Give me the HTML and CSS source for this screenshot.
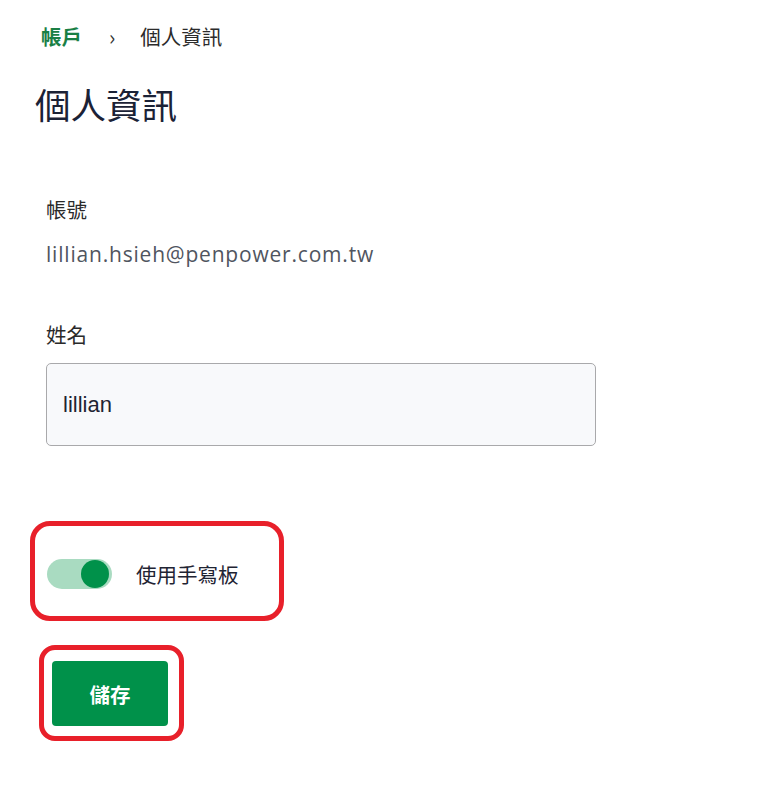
FILE: index.html
```html
<!DOCTYPE html>
<html lang="zh-Hant">
<head>
<meta charset="utf-8">
<link rel="stylesheet" href="styles.css">
</head>
<body>
<div class="page">
  <nav class="crumbs">
    <span class="crumb-link">帳戶</span>
    <span class="crumb-sep">›</span>
    <span class="crumb-current">個人資訊</span>
  </nav>
  <h1 class="title">個人資訊</h1>
  <section class="form">
    <div class="field">
      <div class="label">帳號</div>
      <div class="value">lillian.hsieh@penpower.com.tw</div>
    </div>
    <div class="field field-name">
      <div class="label">姓名</div>
      <div class="input">lillian</div>
    </div>
    <div class="mark mark-toggle">
      <div class="toggle-row">
        <span class="toggle"><span class="knob"></span></span>
        <span class="toggle-text">使用手寫板</span>
      </div>
    </div>
    <div class="mark mark-btn">
      <button class="save">儲存</button>
    </div>
  </section>
</div>
</body>
</html>
```

FILE: styles.css
```css
html, body { margin: 0; padding: 0; background: #fff; }
body {
  font-family: "Noto Sans CJK TC", "Noto Sans", sans-serif;
  color: #1f2433;
}
.page { padding: 22px 0 0 41px; }
.crumbs {
  display: flex;
  align-items: center;
  height: 28px;
  font-size: 20.5px;
  line-height: 28px;
}
.crumb-link { color: #1a7f45; font-weight: 700; }
.crumb-sep { margin: 0 25px 0 27px; color: #333; font-size: 21px; }
.crumb-current { color: #2b2b2b; }
.title {
  margin: 32px 0 0 -6px;
  font-size: 35.5px;
  line-height: 44px;
  font-weight: 400;
  color: #1b2236;
}
.form { margin-left: 5px; padding-top: 69px; }
.field .label { font-size: 20.5px; line-height: 28px; color: #2a2a2a; }
.value {
  margin-top: 17px;
  font-family: "Open Sans", "Noto Sans", sans-serif;
  font-size: 21px;
  letter-spacing: 0.8px;
  line-height: 28px;
  color: #505560;
}
.field-name { margin-top: 52px; }
.input {
  box-sizing: border-box;
  margin-top: 15px;
  width: 550px;
  height: 83px;
  border: 1px solid #a9a9ab;
  border-radius: 5px;
  background: #f8f9fb;
  padding: 0 16px;
  display: flex;
  align-items: center;
  font-family: "Liberation Sans", Arial, sans-serif;
  font-size: 22px;
  color: #1f2433;
}
.mark {
  border: 5px solid #e8202a;
  border-radius: 20px;
  box-sizing: border-box;
  display: inline-block;
}
.mark-toggle {
  display: block;
  width: 254px;
  height: 100px;
  margin: 75px 0 0 -16px;
  padding: 33px 0 0 12px;
}
.toggle-row { display: flex; align-items: center; }
.toggle {
  position: relative;
  width: 65px;
  height: 30px;
  border-radius: 15px;
  background: #a9dbc1;
  display: block;
}
.knob {
  position: absolute;
  right: 3px;
  top: 1px;
  width: 28px;
  height: 28px;
  border-radius: 50%;
  background: #00914a;
}
.toggle-text { margin-left: 24px; font-size: 20.5px; color: #1f2433; }
.mark-btn {
  display: block;
  width: 145px;
  height: 96px;
  margin: 24px 0 0 -7px;
  border-radius: 16px;
  padding: 11px 0 0 8px;
}
.save {
  width: 116px;
  height: 65px;
  border: none;
  border-radius: 4px;
  background: #00914a;
  color: #fff;
  font-family: "Noto Sans CJK TC", sans-serif;
  font-size: 20.5px;
  font-weight: 700;
  padding: 0;
}
```
